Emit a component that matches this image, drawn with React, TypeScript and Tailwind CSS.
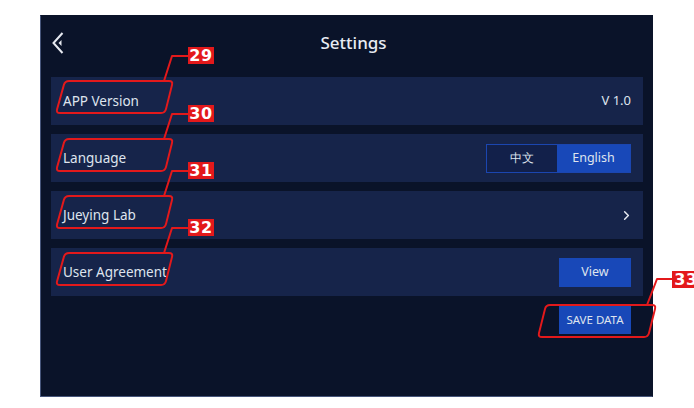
import { ChevronRight } from 'lucide-react'

type Pt = [number, number]

// rounded polygon path, r = corner radius
function roundedPath(pts: Pt[], r: number): string {
  const n = pts.length
  let d = ''
  for (let i = 0; i < n; i++) {
    const [px, py] = pts[(i - 1 + n) % n]
    const [cx, cy] = pts[i]
    const [nx, ny] = pts[(i + 1) % n]
    const l1 = Math.hypot(px - cx, py - cy)
    const l2 = Math.hypot(nx - cx, ny - cy)
    const a: Pt = [cx + ((px - cx) / l1) * r, cy + ((py - cy) / l1) * r]
    const b: Pt = [cx + ((nx - cx) / l2) * r, cy + ((ny - cy) / l2) * r]
    d += `${i === 0 ? 'M' : 'L'}${a[0]},${a[1]} Q${cx},${cy} ${b[0]},${b[1]} `
  }
  return d + 'Z'
}

const RED = '#e3191b'

const LABEL_CALLOUTS = [
  { n: '29', dy: 0 },
  { n: '30', dy: 58 },
  { n: '31', dy: 115 },
  { n: '32', dy: 172 },
]

function Callouts() {
  return (
    <>
      <svg className="absolute left-0 top-0 pointer-events-none" width={694} height={408} fill="none">
        {LABEL_CALLOUTS.map(({ n, dy }) => (
          <g key={n} stroke={RED} strokeWidth={2} strokeLinejoin="round">
            <path
              d={roundedPath(
                [
                  [65, 81 + dy],
                  [173, 81 + dy],
                  [165, 113 + dy],
                  [56, 113 + dy],
                ],
                4,
              )}
            />
            <polyline points={`164,${81 + dy} 172,${56 + dy} 189,${56 + dy}`} />
          </g>
        ))}
        <g stroke={RED} strokeWidth={2} strokeLinejoin="round">
          <path
            d={roundedPath(
              [
                [546, 305],
                [656, 305],
                [648, 337],
                [538, 337],
              ],
              4,
            )}
          />
          <polyline points="647,305 657,279 673,279" />
        </g>
      </svg>
      {LABEL_CALLOUTS.map(({ n, dy }) => (
        <div
          key={n}
          className="absolute left-[188px] w-[26px] h-[17px] bg-[#e3191b] text-white text-[16px] leading-[17px] font-bold text-center tracking-[0.5px] font-['DejaVu_Sans',sans-serif]"
          style={{ top: 47 + dy }}
        >
          {n}
        </div>
      ))}
      {/* cut off by the page edge, as in the source picture */}
      <div className="absolute left-[672px] top-[271px] w-[22px] h-[17px] overflow-hidden bg-[#e3191b]">
        <span className="block w-[28px] text-white text-[16px] leading-[17px] font-bold text-center tracking-[0.5px] font-['DejaVu_Sans',sans-serif]">
          33
        </span>
      </div>
    </>
  )
}

function Row({ label, children }: { label: string; children?: React.ReactNode }) {
  return (
    <div className="h-[48px] bg-[#16244a] flex items-center justify-between pl-[12px] pr-[12px]">
      <span className="text-[13.5px] text-[#dfe4ee]">{label}</span>
      {children}
    </div>
  )
}

export default function App() {
  return (
    <div className="relative w-[694px] h-[408px] bg-white overflow-hidden pt-[15px] pl-[40px] font-['Noto_Sans',sans-serif]">
      <div className="w-[613px] h-[382px] bg-[#0a1329] border border-[#46557a] border-t-[#0a1329] border-r-[#0a1329] flex flex-col pl-[10px] pr-[9px]">
        <div className="relative h-[61px] flex items-center justify-center shrink-0">
          <svg className="absolute left-[1px] top-[16px]" width={12} height={22} viewBox="0 0 12 22" fill="none">
            <polyline points="10.5,1 1.5,11 10.5,21" stroke="#e6e9f0" strokeWidth={2} strokeLinejoin="miter" />
            <path d="M9.5,8 L6.5,11 L9.5,14 Z" fill="#e6e9f0" />
          </svg>
          <h1 className="text-[17px] font-medium text-[#e8ecf3] -mt-[8px] pl-[13px]">Settings</h1>
        </div>

        <div className="flex flex-col gap-[9px]">
          <Row label="APP Version">
            <span className="text-[13px] text-[#dfe4ee]">V 1.0</span>
          </Row>
          <Row label="Language">
            <div className="flex h-[29px] border border-[#1b46b0]">
              <button className="w-[70px] bg-[#12204a] text-[12px] text-[#dfe4ee]">中文</button>
              <button className="w-[73px] bg-[#1848b8] text-[12.5px] text-[#dfe4ee]">English</button>
            </div>
          </Row>
          <Row label="Jueying Lab">
            <ChevronRight size={15} strokeWidth={2.4} className="text-[#e6e9f0] -mr-[3px]" />
          </Row>
          <Row label="User Agreement">
            <button className="w-[72px] h-[29px] bg-[#1848b8] text-[12.5px] text-[#dfe4ee]">View</button>
          </Row>
        </div>

        <div className="flex justify-end pr-[12px] mt-[10px]">
          <button className="w-[72px] h-[28px] bg-[#1848b8] text-[11.5px] text-[#dfe4ee]">SAVE DATA</button>
        </div>
      </div>
      <Callouts />
    </div>
  )
}
